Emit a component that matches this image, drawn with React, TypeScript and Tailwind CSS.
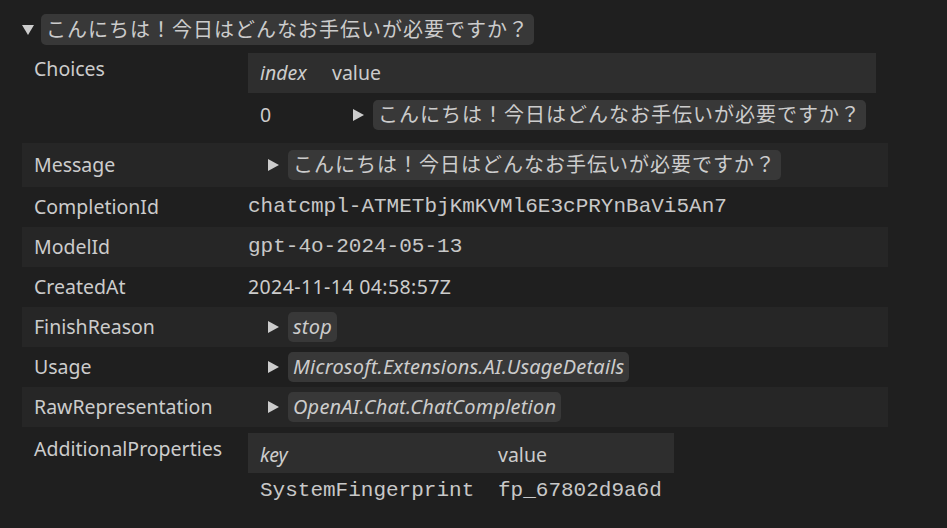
import React from "react";

const jp = "font-['Noto_Sans','Noto_Sans_CJK_JP',sans-serif]";
const mono = "font-['Liberation_Mono',monospace]";
const greeting = "こんにちは！今日はどんなお手伝いが必要ですか？";

const Arrow = ({ down }: { down?: boolean }) => (
  <span className="flex w-[20px] shrink-0 items-center">
    {down ? (
      <svg width="12" height="10" viewBox="0 0 12 10">
        <polygon points="0,0 12,0 6,10" fill="#cccccc" />
      </svg>
    ) : (
      <svg width="11" height="12" viewBox="0 0 11 12">
        <polygon points="0,0 11,6 0,12" fill="#cccccc" />
      </svg>
    )}
  </span>
);

const Pill = ({ text, italic, cjk }: { text: string; italic?: boolean; cjk?: boolean }) => (
  <span
    className={`inline-flex h-[30px] items-center rounded-[5px] bg-[#383838] px-[5px] text-[#cccccc] ${
      cjk ? "text-[20px] tracking-[1px]" : "text-[20px] tracking-[0.2px]"
    } ${italic ? "italic" : ""}`}
  >
    {text}
  </span>
);

const Expander = ({ text, italic, cjk, indent }: { text: string; italic?: boolean; cjk?: boolean; indent: string }) => (
  <div className={`flex items-center ${indent}`}>
    <Arrow />
    <Pill text={text} italic={italic} cjk={cjk} />
  </div>
);

type Row = { label: string; value: React.ReactNode; tall?: boolean };

const rows: Row[] = [
  { label: "Message", value: <Expander text={greeting} cjk indent="ml-[20px]" />, tall: true },
  { label: "CompletionId", value: <span className={`${mono} text-[21px] text-[#c8c8c8]`}>chatcmpl-ATMETbjKmKVMl6E3cPRYnBaVi5An7</span> },
  { label: "ModelId", value: <span className={`${mono} text-[21px] text-[#c8c8c8]`}>gpt-4o-2024-05-13</span> },
  { label: "CreatedAt", value: <span className="tracking-[0.4px]">2024-11-14 04:58:57Z</span> },
  { label: "FinishReason", value: <Expander text="stop" italic indent="ml-[20px]" /> },
  { label: "Usage", value: <Expander text="Microsoft.Extensions.AI.UsageDetails" italic indent="ml-[20px]" /> },
  { label: "RawRepresentation", value: <Expander text="OpenAI.Chat.ChatCompletion" italic indent="ml-[20px]" /> },
];

export default function App() {
  return (
    <div className={`h-[528px] w-[947px] overflow-hidden bg-[#1f1f1f] pl-[22px] pt-[14px] text-[19.5px] text-[#cccccc] ${jp}`}>
      {/* summary line */}
      <div className="flex items-center">
        <Arrow down />
        <span className="-ml-[1px] inline-flex h-[31px] items-center rounded-[5px] bg-[#383838] px-[5px] text-[20px] tracking-[1px]">
          {greeting}
        </span>
      </div>

      <div className="mt-[2px] w-[866px]">
        {/* Choices */}
        <div className="flex py-[6px]">
          <div className="w-[226px] shrink-0 pl-3 leading-[32px]">Choices</div>
          <div className="w-[628px]">
            <div className="flex h-[40px] items-center bg-[#2e2e2e]">
              <span className="w-[72px] pl-3 italic">index</span>
              <span className="pl-3">value</span>
            </div>
            <div className="flex h-[44px] items-center">
              <span className="w-[72px] pl-3">0</span>
              <Expander text={greeting} cjk indent="ml-[33px]" />
            </div>
          </div>
        </div>

        {rows.map((r, i) => (
          <div
            key={r.label}
            className={`flex items-center ${r.tall ? "h-[44px]" : "h-[40px]"} ${i % 2 === 0 ? "bg-[#262626]" : ""}`}
          >
            <div className="w-[226px] shrink-0 pl-3">{r.label}</div>
            <div className="flex items-center">{r.value}</div>
          </div>
        ))}

        {/* AdditionalProperties */}
        <div className="flex py-[6px]">
          <div className="w-[226px] shrink-0 pl-3 leading-[32px]">AdditionalProperties</div>
          <div className="w-[426px]">
            <div className="flex h-[40px] items-center bg-[#2e2e2e]">
              <span className="w-[238px] pl-3 pt-[3px] italic">key</span>
              <span className="pl-3 pt-[3px]">value</span>
            </div>
            <div className={`flex h-[36px] items-center ${mono} text-[21px] text-[#c8c8c8]`}>
              <span className="w-[238px] pl-3">SystemFingerprint</span>
              <span className="pl-3">fp_67802d9a6d</span>
            </div>
          </div>
        </div>
      </div>
    </div>
  );
}
